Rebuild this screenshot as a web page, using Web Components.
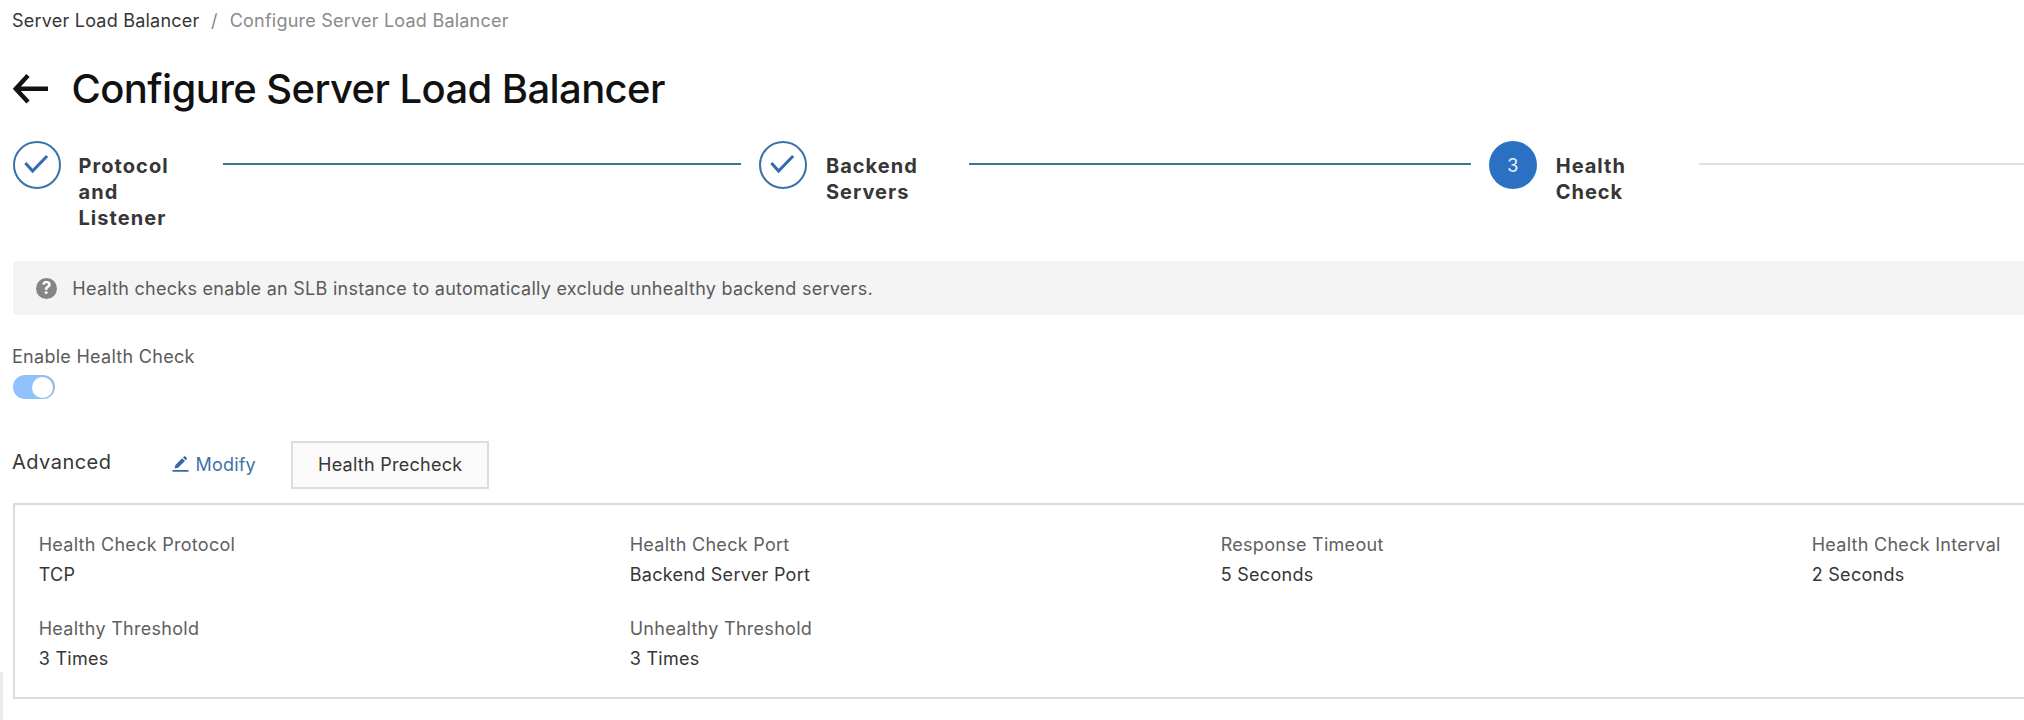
<!DOCTYPE html>
<html lang="en">
<head>
<meta charset="utf-8">
<title>Configure Server Load Balancer</title>
<style>
html,body{margin:0;height:720px;overflow:hidden;background:#fff}
body{font:400 18px/25px Inter,"Liberation Sans",sans-serif;letter-spacing:.3px;color:#363636}
</style>
</head>
<body>
<slb-page>
  <slb-breadcrumb><span>Server Load Balancer</span><span slot="current">Configure Server Load Balancer</span></slb-breadcrumb>
  <slb-title>Configure Server Load Balancer</slb-title>
  <slb-steps>
    <slb-step state="done" style="width:746px;--text-gap:17.5px;--label:144.5px;--ls:1.06px">Protocol<br>and<br>Listener</slb-step>
    <slb-step state="done" style="width:730px;--text-gap:19px;--label:143px;--ls:1px">Backend<br>Servers</slb-step>
    <slb-step state="current" number="3" style="width:553px;--text-gap:18.7px;--label:143.3px;--ls:1px">Health<br>Check</slb-step>
  </slb-steps>
  <slb-notice>Health checks enable an SLB instance to automatically exclude unhealthy backend servers.</slb-notice>
  <slb-toggle>Enable Health Check</slb-toggle>
  <slb-toolbar><span>Advanced</span><slb-modify slot="link">Modify</slb-modify><slb-button slot="button">Health Precheck</slb-button></slb-toolbar>
  <slb-panel>
    <slb-field label="Health Check Protocol">TCP</slb-field>
    <slb-field label="Health Check Port">Backend Server Port</slb-field>
    <slb-field label="Response Timeout">5 Seconds</slb-field>
    <slb-field label="Health Check Interval">2 Seconds</slb-field>
    <slb-field label="Healthy Threshold">3 Times</slb-field>
    <slb-field label="Unhealthy Threshold">3 Times</slb-field>
  </slb-panel>
</slb-page>
<script>
const define = (name, render) => customElements.define(name, class extends HTMLElement {
  constructor() { super(); this.attachShadow({ mode: 'open' }).innerHTML = render(this); }
});

define('slb-page', () => `<style>
:host{display:block;box-sizing:border-box;position:relative;height:720px;padding:8px 0 0 12px;overflow:hidden}
.edge{position:absolute;left:0;top:672px;width:3px;height:48px;background:#ebebeb}
</style><slot></slot><div class="edge"></div>`);

define('slb-breadcrumb', () => `<style>
:host{display:flex;height:25px;letter-spacing:.22px;white-space:nowrap}
.sep{margin:0 12px 0 11.5px;color:#888}
.cur{color:#8a8a8a}
</style><slot></slot><span class="sep">/</span><span class="cur"><slot name="current"></slot></span>`);

define('slb-title', () => `<style>
:host{display:flex;margin-top:30px;height:51px;font:500 40px/51px Inter,sans-serif;letter-spacing:-.59px;color:#111;white-space:nowrap}
svg{width:36px;height:30px;margin:11px 22.5px 0 1px;flex:none}
</style><svg viewBox="0 0 36 30" fill="none" stroke="#111" stroke-width="4.4"><path d="M15 1.5 2.8 14.8 15 28M3 14.8h32"/></svg><slot></slot>`);

define('slb-steps', () => `<style>:host{display:flex;margin:27px 0 0 1px;height:90px}</style><slot></slot>`);

define('slb-step', el => {
  const done = el.getAttribute('state') === 'done';
  return `<style>
:host{display:flex;flex:none;box-sizing:border-box;padding-right:${done ? 18 : 0}px}
.dot{box-sizing:border-box;flex:none;width:48px;height:48px;border-radius:50%;display:flex;align-items:center;justify-content:center;${done ? 'border:2px solid #3b73a8' : 'background:#2a71c4;color:#e8f3ff'}}
.dot svg{width:44px;height:44px}
.label{flex:none;margin:12px 0 0 var(--text-gap);width:var(--label);font:700 20px/26px Inter,sans-serif;letter-spacing:var(--ls)}
.line{flex:1;margin-top:22px;height:2px;background:${done ? '#3f7492' : '#e0e2e2'}}
</style><div class="dot">${done
  ? '<svg viewBox="0 0 44 44" fill="none" stroke="#3569b3" stroke-width="3"><path d="m10.4 20 7.2 8 14.5-15"/></svg>'
  : el.getAttribute('number')}</div><div class="label"><slot></slot></div><div class="line"></div>`;
});

define('slb-notice', () => `<style>
:host{display:flex;box-sizing:border-box;margin:30px -6px 0 1px;height:54px;padding:15px 0 0 23px;border-radius:3px;background:#f4f4f4;color:#5a5a5a;letter-spacing:.27px;white-space:nowrap}
.icon{flex:none;width:21px;height:21px;margin:2px 15.3px 0 0;border-radius:50%;background:#858585;color:#fff;font:700 17px/21px Inter,sans-serif;letter-spacing:0;text-align:center}
</style><span class="icon">?</span><slot></slot>`);

define('slb-toggle', () => `<style>
:host{display:block;margin-top:29px;height:55px;color:#5a5a5a;letter-spacing:.28px}
.track{box-sizing:border-box;width:42px;height:24px;margin:6px 0 0 1px;padding:1.5px 2.5px;border-radius:12px;background:linear-gradient(90deg,#8fc1fa 55%,#93bbe3)}
.knob{width:21px;height:21px;margin-left:auto;border-radius:50%;background:#fff}
</style><slot></slot><div class="track"><div class="knob"></div></div>`);

define('slb-toolbar', () => `<style>
:host{display:flex;margin-top:42px;height:48px;white-space:nowrap}
.name{width:160px;padding-top:8px;font-size:20px;line-height:26px;letter-spacing:.47px}
.link{width:119px}
</style><span class="name"><slot></slot></span><span class="link"><slot name="link"></slot></span><slot name="button"></slot>`);

define('slb-modify', () => `<style>
:host{display:flex;padding-top:11px;color:#3b73a8;letter-spacing:.2px}
svg{flex:none;width:17px;height:17px;margin:4px 6.5px 0 0}
</style><svg viewBox="0 0 17 17" fill="#3569a8"><path d="M.5 14h16v1.8H.5zM2.5 12.6l.9-3.7 6.7-6.7 2.9 2.9-6.8 6.7zM11 1.4l.8-.8c.5-.5 1.1-.5 1.6 0l1.2 1.2c.5.5.5 1.1 0 1.6l-.8.8z"/></svg><slot></slot>`);

define('slb-button', () => `<style>
:host{display:block;box-sizing:border-box;flex:none;width:198px;height:48px;padding:9px 0 0 25px;border:2px solid #dcdcdc;background:#fafafa;letter-spacing:.27px}
</style><slot></slot>`);

define('slb-panel', () => `<style>
:host{display:grid;box-sizing:border-box;width:2040px;height:196px;margin:14px 0 0 1px;padding:27px 0 0 23.7px;border:2px solid #dbdbdb;grid-template-columns:repeat(4,591px);grid-auto-rows:55px;row-gap:29px}
</style><slot></slot>`);

define('slb-field', el => `<style>
:host{display:flex;flex-direction:column;gap:5px;letter-spacing:.28px;white-space:nowrap}
.label{color:#606060}
</style><span class="label">${el.getAttribute('label')}</span><span><slot></slot></span>`);
</script>
</body>
</html>
